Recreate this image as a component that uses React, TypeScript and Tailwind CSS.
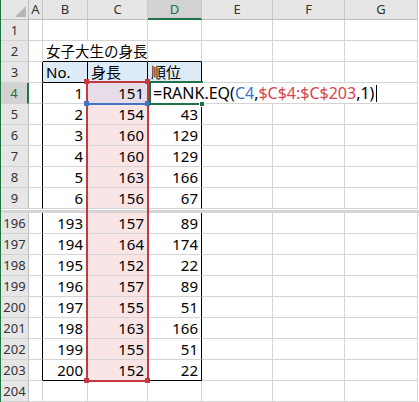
import React from 'react';
import { twMerge } from 'tailwind-merge';

const grid = 'grid grid-cols-[28px_14px_45px_60px_54px_71px_72px_73px]';

const topRows: [number, number, number, number | null][] = [
  [4, 1, 151, null],
  [5, 2, 154, 43],
  [6, 3, 160, 129],
  [7, 4, 160, 129],
  [8, 5, 163, 166],
  [9, 6, 156, 67],
];

const bottomRows: [number, number, number, number][] = [
  [196, 193, 157, 89],
  [197, 194, 164, 174],
  [198, 195, 152, 22],
  [199, 196, 157, 89],
  [200, 197, 155, 51],
  [201, 198, 163, 166],
  [202, 199, 155, 51],
  [203, 200, 152, 22],
];

function Cell({ className = '', children }: { className?: string; children?: React.ReactNode }) {
  return (
    <div className={twMerge('h-[21px] border-r border-b border-[#d4d4d4] leading-[20px] whitespace-nowrap', className)}>
      {children}
    </div>
  );
}

function RowHead({ n, active = false }: { n: number; active?: boolean }) {
  return (
    <div
      className={twMerge(
        'h-[21px] border-b border-r border-b-[#d2d2d2] border-r-[#bdbdbd] bg-[#e6e6e6] text-center text-[13px] leading-[20px] text-[#333]',
        active && 'bg-[#d2d2d2] border-r-2 border-r-[#217346] text-[#217346]'
      )}
    >
      {n}
    </div>
  );
}

function PlainCells() {
  return (
    <>
      <Cell />
      <Cell />
      <Cell />
    </>
  );
}

function DataRow({ row, no, h, rank, last = false }: { row: number; no: number; h: number; rank: number | null; last?: boolean }) {
  const first = row === 4;
  return (
    <div className={grid}>
      <RowHead n={row} active={first} />
      <Cell className="border-r-black" />
      <Cell className={twMerge('text-right pr-[4px]', last && 'border-b-black')}>{no}</Cell>
      <Cell className={twMerge('text-right pr-[3px] bg-[#f9e5e6]', first && 'bg-[#e6dde8]', last && 'border-b-black')}>{h}</Cell>
      <Cell className={twMerge('text-right pr-[3px] border-r-black', last && 'border-b-black')}>{rank}</Cell>
      <PlainCells />
    </div>
  );
}

export default function App() {
  const letters = ['A', 'B', 'C', 'D', 'E', 'F', 'G'];
  return (
    <div className="flex w-[419px] h-[402px] overflow-hidden bg-white text-[15px] text-black font-['Noto_Sans','Noto_Sans_CJK_JP',sans-serif]">
      <div className="w-px bg-[#217346]" />
      <div className="relative w-[418px]">
        {/* column headers */}
        <div className={twMerge(grid, 'h-[20px]')}>
          <div className="relative h-[20px] border-r border-b border-[#bdbdbd] bg-[#e6e6e6]">
            <svg className="absolute left-[14px] top-[6px]" width="11" height="11" viewBox="0 0 11 11">
              <polygon points="11,0 11,11 0,11" fill="#b5b5b5" />
            </svg>
          </div>
          {letters.map((l) => (
            <div
              key={l}
              className={twMerge(
                'h-[20px] border-r border-b border-r-[#c8c8c8] border-b-[#bdbdbd] bg-[#e6e6e6] text-center text-[13px] leading-[19px] text-[#333]',
                l === 'D' && 'bg-[#d2d2d2] border-b-2 border-b-[#217346] text-[#217346]'
              )}
            >
              {l}
            </div>
          ))}
        </div>

        {/* row 1 */}
        <div className={grid}>
          <RowHead n={1} />
          <Cell />
          <Cell />
          <Cell />
          <Cell />
          <PlainCells />
        </div>

        {/* row 2: title */}
        <div className={grid}>
          <RowHead n={2} />
          <Cell />
          <Cell className="border-r-0 border-b-black pl-[3px] relative z-10 overflow-visible text-[14.5px]">女子大生の身長</Cell>
          <Cell className="border-b-black" />
          <Cell className="border-b-black" />
          <PlainCells />
        </div>

        {/* row 3: table header */}
        <div className={grid}>
          <RowHead n={3} />
          <Cell className="border-r-black" />
          <Cell className="bg-[#ddebf7] border-r-black border-b-black pl-[3px]">No.</Cell>
          <Cell className="bg-[#ddebf7] border-r-black border-b-black pl-[3px]">身長</Cell>
          <Cell className="bg-[#ddebf7] border-r-black border-b-black pl-[3px]">順位</Cell>
          <PlainCells />
        </div>

        {topRows.map(([row, no, h, rank]) => (
          <DataRow key={row} row={row} no={no} h={h} rank={rank} />
        ))}

        {/* split between row 9 and row 196 */}
        <div className="h-[4px] border-t border-white bg-[#d4d4d4]" />

        {bottomRows.map(([row, no, h, rank]) => (
          <DataRow key={row} row={row} no={no} h={h} rank={rank} last={row === 203} />
        ))}

        {/* row 204 */}
        <div className={grid}>
          <RowHead n={204} />
          <Cell />
          <Cell />
          <Cell />
          <Cell />
          <PlainCells />
        </div>

        {/* reference highlights */}
        <div className="absolute left-[85px] top-[81px] w-[63px] h-[24px] border-2 border-[#4472c4]" />
        <div className="absolute left-[85px] top-[81px] w-[63px] h-[301px] border-2 border-[#c5383f]" />
        <div className="absolute left-[83px] top-[79px] w-[5px] h-[5px] bg-[#c5383f]" />
        <div className="absolute left-[144px] top-[79px] w-[5px] h-[5px] bg-[#c5383f]" />
        <div className="absolute left-[83px] top-[101px] w-[5px] h-[5px] bg-[#4472c4]" />
        <div className="absolute left-[144px] top-[101px] w-[5px] h-[5px] bg-[#4472c4]" />
        <div className="absolute left-[83px] top-[378px] w-[5px] h-[5px] bg-[#c5383f]" />
        <div className="absolute left-[144px] top-[378px] w-[5px] h-[5px] bg-[#c5383f]" />

        {/* active cell D4 in edit mode */}
        <div className="absolute left-[148px] top-[81px] w-[54px] h-[24px] border-2 border-[#217346]" />
        <div className="absolute left-[150px] top-[83px] w-[234px] h-[20px] bg-white pl-[2px] text-[16px] leading-[20px] whitespace-nowrap">
          =RANK.EQ(<span className="text-[#3f6fc6]">C4</span>,<span className="text-[#d8434a]">$C$4:$C$203</span>,1)
          <span className="inline-block w-px h-[17px] ml-[2px] align-[-3px] bg-black" />
        </div>
        <div className="absolute left-[198px] top-[101px] w-[6px] h-[6px] bg-[#217346] border border-white" />
      </div>
    </div>
  );
}
